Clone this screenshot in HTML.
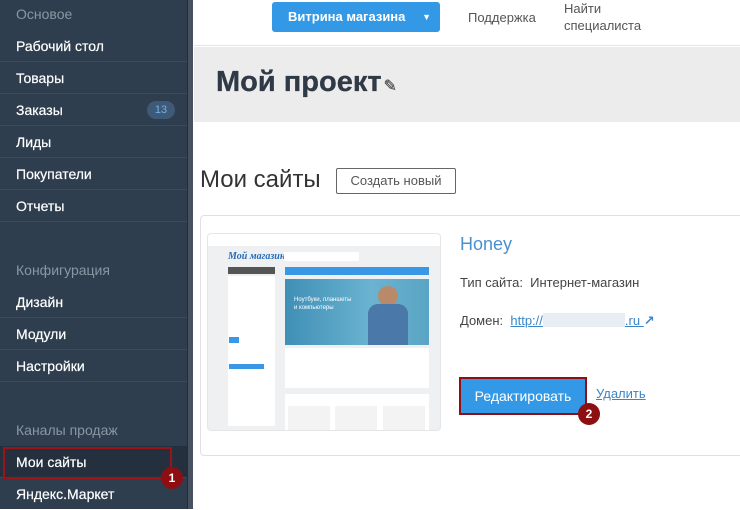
<!DOCTYPE html>
<html><head><meta charset="utf-8"><style>
*{margin:0;padding:0;box-sizing:border-box}
body{width:740px;height:509px;overflow:hidden;background:#fff;font-family:"Liberation Sans","DejaVu Sans",sans-serif;position:relative}
.sb{position:absolute;left:0;top:0;width:187px;height:509px;background:#2f3e4e}
.sbb{position:absolute;left:187px;top:0;width:6px;height:509px;background:#46525f;border-left:1px solid #222d38}
.it{position:absolute;left:0;width:187px;height:32px;line-height:32px;padding-left:16px;color:#fff;font-size:14px;border-bottom:1px solid #3c4b5b;-webkit-text-stroke:.2px #fff}
.hd{position:absolute;left:16px;color:#8a96a3;font-size:14px}
.badge{position:absolute;right:12px;top:7px;width:28px;height:18px;border-radius:9px;background:#3f5a76;color:#6eb0e8;font-size:11px;line-height:18px;text-align:center;-webkit-text-stroke:0}
.a{position:absolute}
</style></head><body>
<div class="sb"></div><div class="sbb"></div>
<div class="hd" style="top:6px">Основое</div>
<div class="it" style="top:30px">Рабочий стол</div>
<div class="it" style="top:62px">Товары</div>
<div class="it" style="top:94px">Заказы<div class="badge">13</div></div>
<div class="it" style="top:126px">Лиды</div>
<div class="it" style="top:158px">Покупатели</div>
<div class="it" style="top:190px">Отчеты</div>
<div class="hd" style="top:262px">Конфигурация</div>
<div class="it" style="top:286px">Дизайн</div>
<div class="it" style="top:318px">Модули</div>
<div class="it" style="top:350px">Настройки</div>
<div class="hd" style="top:422px">Каналы продаж</div>
<div class="it" style="top:446px;background:#24303d">Мои сайты</div>
<div class="a" style="left:3px;top:447px;width:169px;height:32px;border:2px solid #9b1418"></div>
<div class="a" style="left:161px;top:467px;width:22px;height:22px;border-radius:50%;background:#8e0f12;color:#fff;font-size:12px;font-weight:bold;text-align:center;line-height:22px">1</div>
<div class="it" style="top:478px;border:0">Яндекс.Маркет</div>

<div class="a" style="left:194px;top:0;width:546px;height:46px;background:#fff;border-bottom:1px solid #e3e3e3"></div>
<div class="a" style="left:272px;top:2px;width:168px;height:30px;background:#3399e6;border-radius:3px;color:#fff;font-size:13px;font-weight:bold;line-height:30px;padding-left:16px">Витрина магазина<span style="position:absolute;right:9px;top:0;font-size:9px">▼</span></div>
<div class="a" style="left:468px;top:10px;color:#555;font-size:13px">Поддержка</div>
<div class="a" style="left:564px;top:0;color:#555;font-size:13px;line-height:17px">Найти<br>специалиста</div>
<div class="a" style="left:194px;top:47px;width:546px;height:75px;background:#ececec"></div>
<div class="a" style="left:216px;top:66px;color:#2f3a46;font-size:29px;font-weight:bold;-webkit-text-stroke:.3px">Мой проект<span style="font-size:16px;color:#555;margin-left:2px">✎</span></div>
<div class="a" style="left:200px;top:166px;color:#333;font-size:24px">Мои сайты</div>
<div class="a" style="left:336px;top:168px;width:120px;height:26px;border:1px solid #666;border-radius:2px;font-size:13px;color:#555;line-height:24px;text-align:center">Создать новый</div>

<div class="a" style="left:200px;top:215px;width:560px;height:241px;border:1px solid #e0e0e0;border-radius:4px"></div>
<div class="a" style="left:207px;top:233px;width:234px;height:198px;background:#eef0f2;border:1px solid #e6e6e6;border-radius:4px;overflow:hidden">
 <div class="a" style="left:0;top:0;width:234px;height:12px;background:#fff"></div>
 <div class="a" style="left:20px;top:17px;color:#2a6cb8;font-size:10px;font-style:italic;font-weight:bold;font-family:'Liberation Serif',serif">Мой магазин</div>
 <div class="a" style="left:76px;top:18px;width:75px;height:9px;background:#fff"></div>
 <div class="a" style="left:20px;top:33px;width:47px;height:7px;background:#555"></div>
 <div class="a" style="left:77px;top:33px;width:144px;height:8px;background:#3a97e6"></div>
 <div class="a" style="left:20px;top:42px;width:47px;height:150px;background:#fff"></div>
 <div class="a" style="left:77px;top:45px;width:144px;height:66px;background:linear-gradient(90deg,#3f8fb6,#6bb3d0 60%,#5aa4c4)"></div>
 <div class="a" style="left:86px;top:62px;color:#fff;font-size:6px;line-height:8px">Ноутбуки, планшеты<br>и компьютеры</div>
 <div class="a" style="left:170px;top:52px;width:20px;height:20px;border-radius:50%;background:#b88a6a"></div>
 <div class="a" style="left:160px;top:70px;width:40px;height:41px;background:#4a78a8;border-radius:10px 10px 0 0"></div>
 <div class="a" style="left:77px;top:114px;width:144px;height:40px;background:#fff"></div>
 <div class="a" style="left:77px;top:160px;width:144px;height:40px;background:#fff"></div>
 <div class="a" style="left:80px;top:172px;width:42px;height:30px;background:#f3f3f3"></div>
 <div class="a" style="left:127px;top:172px;width:42px;height:30px;background:#f3f3f3"></div>
 <div class="a" style="left:175px;top:172px;width:42px;height:30px;background:#f3f3f3"></div>
 <div class="a" style="left:21px;top:130px;width:35px;height:5px;background:#3a97e6"></div>
 <div class="a" style="left:21px;top:103px;width:10px;height:6px;background:#3a97e6"></div>
</div>

<div class="a" style="left:460px;top:234px;color:#4a90d0;font-size:18px">Honey</div>
<div class="a" style="left:460px;top:275px;color:#444;font-size:13px">Тип сайта:&nbsp; Интернет-магазин</div>
<div class="a" style="left:460px;top:313px;color:#444;font-size:13px">Домен:&nbsp; <span style="color:#3a86c8;text-decoration:underline">http://<span style="display:inline-block;width:82px;height:14px;background:#e8eef3;vertical-align:-2px"></span>.ru </span> <span style="color:#3a86c8;font-weight:bold">↗</span></div>
<div class="a" style="left:459px;top:377px;width:128px;height:38px;border:2px solid #8e1015;background:#3399e6;color:#fff;font-size:14px;line-height:34px;text-align:center">Редактировать</div>
<div class="a" style="left:578px;top:403px;width:22px;height:22px;border-radius:50%;background:#8e0f12;color:#fff;font-size:12px;font-weight:bold;text-align:center;line-height:22px">2</div>
<div class="a" style="left:596px;top:386px;color:#3a86c8;font-size:13px;text-decoration:underline">Удалить</div>
</body></html>
